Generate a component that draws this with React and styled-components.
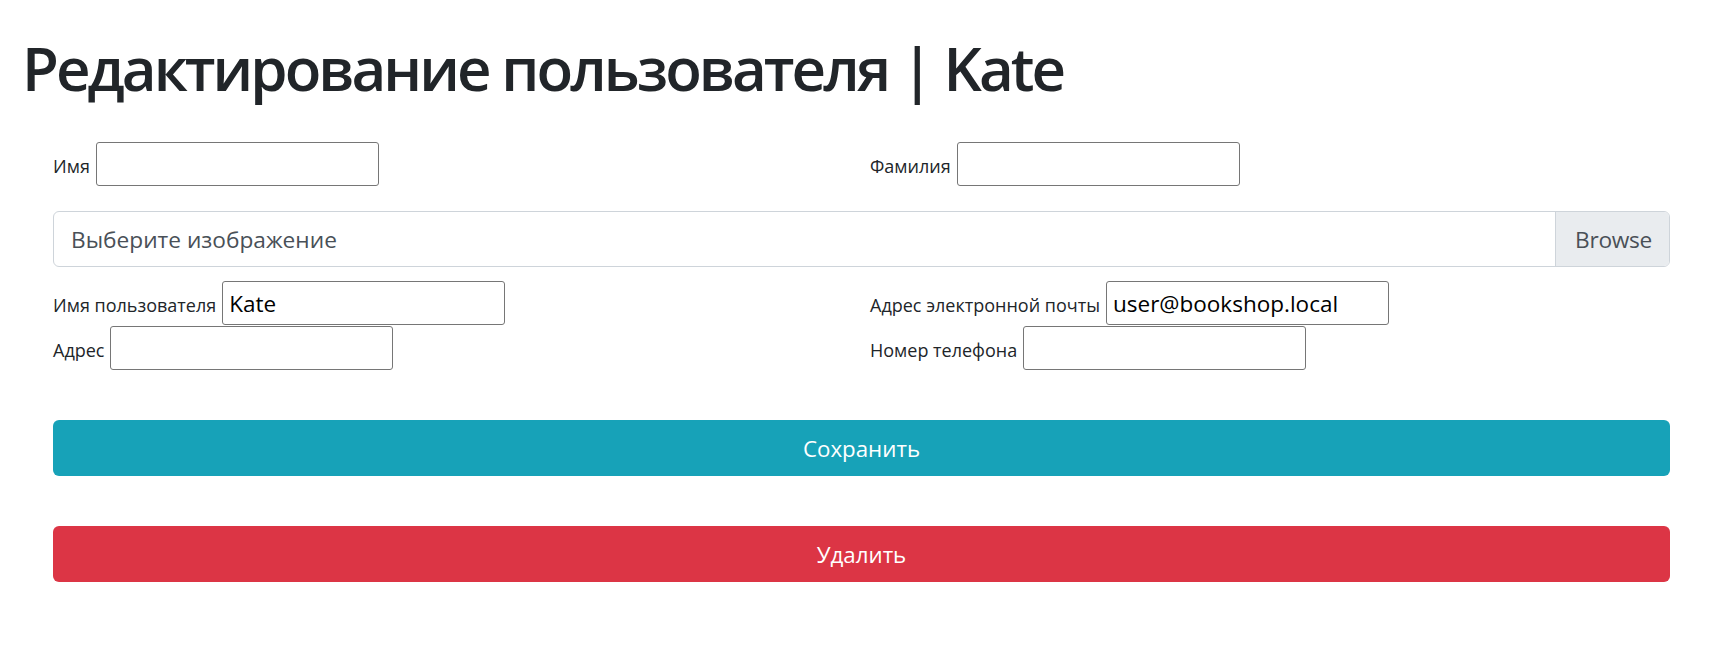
import React from "react";
import styled, { createGlobalStyle } from "styled-components";

const Global = createGlobalStyle`
  html, body { margin: 0; padding: 0; background: #fff; }
  body { font-family: "Open Sans", "Noto Sans", sans-serif; color: #212529; }
  * { box-sizing: border-box; }
`;

const Page = styled.div`
  padding: 32px 63px 40px 22px;
`;

const Title = styled.h1`
  margin: 0;
  font-size: 60px;
  line-height: 72px;
  font-weight: 600;
  color: #212529;
  letter-spacing: -2.95px;
`;

const Form = styled.form`
  margin: 38px 0 0 31px;
  display: flex;
  flex-direction: column;
`;

const Row = styled.div`
  display: grid;
  grid-template-columns: 817px 1fr;
  height: 44px;
  margin-top: ${(p) => p.$gap || 0}px;
`;

const Field = styled.div`
  display: flex;
  align-items: baseline;
  gap: 6px;
`;

const Label = styled.label`
  font-size: 18px;
  color: #212529;
  white-space: nowrap;
`;

const Input = styled.input`
  width: 283px;
  height: 44px;
  border: 1px solid #767676;
  border-radius: 3px;
  padding: 1px 6px;
  font-family: "Open Sans", sans-serif;
  font-size: 22.5px;
  color: #000;
  background: #fff;
  outline: none;
`;

const FileBox = styled.div`
  margin-top: 25px;
  display: flex;
  height: 56px;
  border: 1px solid #ced4da;
  border-radius: 6px;
  overflow: hidden;
  font-size: 22.7px;
  color: #495057;
`;

const FileLabel = styled.div`
  flex: 1;
  display: flex;
  align-items: center;
  padding: 0 17px;
`;

const BrowseButton = styled.div`
  display: flex;
  align-items: center;
  padding: 0 17px 0 19px;
  background: #e9ecef;
  border-left: 1px solid #ced4da;
  letter-spacing: -0.3px;
`;

const Button = styled.button`
  margin-top: ${(p) => p.$gap}px;
  width: 100%;
  height: 56px;
  border: none;
  border-radius: 6px;
  background: ${(p) => p.$bg};
  color: #fff;
  font-family: "Open Sans", sans-serif;
  font-size: 22.3px;
  cursor: pointer;
`;

function TextField({ label, value }) {
  return (
    <Field>
      <Label>{label}</Label>
      <Input type="text" defaultValue={value || ""} />
    </Field>
  );
}

export default function App() {
  return (
    <>
      <Global />
      <Page>
        <Title>Редактирование пользователя | Kate</Title>
        <Form onSubmit={(e) => e.preventDefault()}>
          <Row>
            <TextField label="Имя" />
            <TextField label="Фамилия" />
          </Row>
          <FileBox>
            <FileLabel>Выберите изображение</FileLabel>
            <BrowseButton>Browse</BrowseButton>
          </FileBox>
          <Row $gap={14}>
            <TextField label="Имя пользователя" value="Kate" />
            <TextField label="Адрес электронной почты" value="user@bookshop.local" />
          </Row>
          <Row $gap={1}>
            <TextField label="Адрес" />
            <TextField label="Номер телефона" />
          </Row>
          <Button type="button" $gap={50} $bg="#17a2b8">Сохранить</Button>
          <Button type="button" $gap={50} $bg="#dc3545">Удалить</Button>
        </Form>
      </Page>
    </>
  );
}
